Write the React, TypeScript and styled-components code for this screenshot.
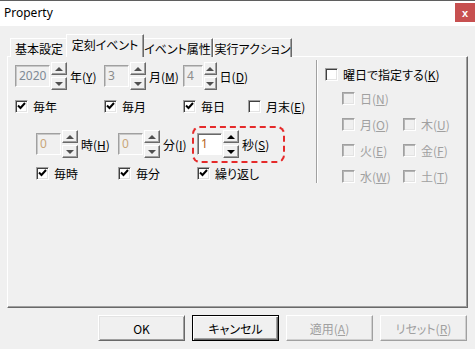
import React from 'react';
import styled, { createGlobalStyle } from 'styled-components';

// ── Global ────────────────────────────────────────────────────────────────────

const GlobalStyle = createGlobalStyle`
  html, body { margin: 0; padding: 0; background: #f0f0f0; }
  body { font-family: "Noto Sans CJK JP", "Noto Sans", sans-serif; }
  * { box-sizing: border-box; }
`;

const JP = `"Noto Sans CJK JP", "Noto Sans", sans-serif`;

// ── Window chrome ─────────────────────────────────────────────────────────────

const Window = styled.div`
  width: 475px;
  height: 349px;
  display: flex;
  flex-direction: column;
  background: #f0f0f0;
  border-top: 1px solid #5f5f5f;
  font-family: ${JP};
  font-size: 12px;
  font-feature-settings: "palt";
  color: #000;
  overflow: hidden;
`;

const TitleBar = styled.div`
  height: 25px;
  background: #fff;
  display: flex;
  align-items: flex-start;
  justify-content: space-between;
  flex-shrink: 0;
`;

const Title = styled.span`
  font-family: "Noto Sans", "Liberation Sans", sans-serif;
  font-size: 12px;
  line-height: 14px;
  padding: 5px 0 0 4px;
`;

const CloseBtn = styled.div`
  width: 20px;
  height: 19px;
  margin-top: 2px;
  background: #c75050;
  color: #fff;
  font-family: "Liberation Sans", sans-serif;
  font-weight: 700;
  font-size: 11px;
  display: flex;
  align-items: center;
  justify-content: center;
`;

const Body = styled.div`
  flex: 1;
  display: flex;
  flex-direction: column;
  padding-top: 8px;
`;

// ── Tabs ──────────────────────────────────────────────────────────────────────

const TabStrip = styled.div`
  display: flex;
  align-items: flex-end;
  height: 23px;
  padding-left: 10px;
  margin-bottom: -1px;
  position: relative;
  z-index: 1;
`;

const Tab = styled.div<{ $w: number; $active?: boolean }>`
  width: ${p => p.$w + (p.$active ? 4 : 0)}px;
  height: ${p => (p.$active ? 23 : 19)}px;
  margin: ${p => (p.$active ? '0 -2px' : '0')};
  padding-bottom: ${p => (p.$active ? 3 : 0)}px;
  position: relative;
  z-index: ${p => (p.$active ? 2 : 1)};
  background: #f0f0f0;
  border: 1px solid;
  border-bottom: none;
  border-color: #fff #696969 transparent #fff;
  box-shadow: inset -1px 0 #a0a0a0;
  display: flex;
  align-items: center;
  justify-content: center;
  font-size: 12px;
  white-space: nowrap;
`;

const Panel = styled.div`
  margin-left: 7px;
  width: 461px;
  height: 252px;
  border: 1px solid;
  border-color: #fff #696969 #696969 #fff;
  box-shadow: inset -1px -1px #a0a0a0;
  display: flex;
`;

// ── Left section ──────────────────────────────────────────────────────────────

const LeftSection = styled.div`
  width: 308px;
  display: flex;
  flex-direction: column;
  padding-top: 5px;
`;

const FieldGrid = styled.div<{ $cols: string; $pad: number; $gap: number; $mt?: number }>`
  display: grid;
  grid-template-columns: ${p => p.$cols};
  grid-template-rows: 28px 16px;
  row-gap: ${p => p.$gap}px;
  align-items: center;
  padding-left: ${p => p.$pad}px;
  margin-top: ${p => p.$mt ?? 0}px;
`;

const Field = styled.div`
  display: flex;
  align-items: center;
  height: 28px;
`;

const Edit = styled.div<{ $w: number; $disabled?: boolean; $color: string }>`
  width: ${p => p.$w}px;
  height: 22px;
  border: 1px solid;
  border-color: #a0a0a0 #fff #fff #a0a0a0;
  box-shadow: ${p => (p.$disabled ? 'inset 1px 1px #c8c8c8' : 'inset 1px 1px #696969')};
  background: ${p => (p.$disabled ? '#f0f0f0' : '#fff')};
  color: ${p => p.$color};
  font-family: "Noto Sans", sans-serif;
  font-size: 12px;
  line-height: 20px;
  padding-left: 3px;
`;

const SpinWrap = styled.div`
  width: 16px;
  height: 28px;
  margin-left: 1px;
  display: flex;
  flex-direction: column;
  justify-content: space-between;
`;

const SpinBtn = styled.div`
  height: 13px;
  border: 1px solid;
  border-color: #fff #696969 #696969 #fff;
  box-shadow: inset -1px -1px #a0a0a0;
  background: #f0f0f0;
  display: flex;
  align-items: center;
  justify-content: center;
`;

const Arrow = styled.span<{ $down?: boolean; $c: string }>`
  width: 0;
  height: 0;
  border-left: 4px solid transparent;
  border-right: 4px solid transparent;
  ${p => (p.$down ? `border-top: 4px solid ${p.$c};` : `border-bottom: 4px solid ${p.$c};`)}
`;

const FieldLabel = styled.span`
  margin-left: 3px;
  white-space: nowrap;
  font-size: 12px;
`;

const SecondsBox = styled.div`
  width: 93px;
  height: 37px;
  margin-left: -5px;
  padding-left: 3px;
  border: 2px dashed #e52a2a;
  border-radius: 8px;
  display: flex;
  align-items: center;
`;

// ── Checkbox ──────────────────────────────────────────────────────────────────

const Check = styled.label<{ $disabled?: boolean }>`
  display: flex;
  align-items: center;
  gap: 5px;
  height: 16px;
  white-space: nowrap;
  font-size: 12px;
  color: ${p => (p.$disabled ? '#a0a0a0' : '#000')};
`;

const Box = styled.span<{ $disabled?: boolean }>`
  width: 13px;
  height: 13px;
  flex-shrink: 0;
  border: 1px solid;
  border-color: #a0a0a0 #fff #fff #a0a0a0;
  box-shadow: ${p =>
    p.$disabled ? 'inset 1px 1px #b4b4b4, inset -1px -1px #e3e3e3' : 'inset 1px 1px #404040, inset -1px -1px #e3e3e3'};
  background: ${p => (p.$disabled ? '#f0f0f0' : '#fff')};
  display: flex;
  align-items: center;
  justify-content: center;
`;

// ── Right section ─────────────────────────────────────────────────────────────

const Separator = styled.div`
  width: 2px;
  height: 123px;
  margin-top: 3px;
  border-left: 1px solid #a0a0a0;
  border-right: 1px solid #fff;
`;

const RightSection = styled.div`
  display: flex;
  flex-direction: column;
  padding: 9px 0 0 7px;
`;

const DayGrid = styled.div`
  display: grid;
  grid-template-columns: 61px auto;
  row-gap: 10px;
  padding-left: 17px;
  margin-top: 8px;
`;

const DayCell = styled.div<{ $wide?: boolean }>`
  grid-column: ${p => (p.$wide ? '1 / span 2' : 'auto')};
`;

// ── Buttons ───────────────────────────────────────────────────────────────────

const ButtonRow = styled.div`
  display: flex;
  justify-content: flex-end;
  gap: 7px;
  padding: 7px 8px 0 0;
`;

const Btn = styled.div<{ $default?: boolean; $disabled?: boolean }>`
  width: 87px;
  height: 26px;
  display: flex;
  align-items: center;
  justify-content: center;
  font-size: 12px;
  background: #f0f0f0;
  color: ${p => (p.$disabled ? '#a0a0a0' : '#000')};
  border: 1px solid;
  border-color: ${p => (p.$default ? '#000' : p.$disabled ? '#fff #a0a0a0 #a0a0a0 #fff' : '#fff #696969 #696969 #fff')};
  box-shadow: ${p =>
    p.$default
      ? 'inset 1px 1px #fff, inset -1px -1px #696969, inset -2px -2px #a0a0a0'
      : p.$disabled
      ? 'inset -1px -1px #d0d0d0'
      : 'inset 1px 1px #e3e3e3, inset -1px -1px #a0a0a0'};
`;

// ── Parts ─────────────────────────────────────────────────────────────────────

function Mn({ label, k }: { label: string; k: string }) {
  return (
    <>
      {label}(<u>{k}</u>)
    </>
  );
}

function Spin({ c }: { c: string }) {
  return (
    <SpinWrap>
      <SpinBtn><Arrow $c={c} /></SpinBtn>
      <SpinBtn><Arrow $c={c} $down /></SpinBtn>
    </SpinWrap>
  );
}

function CheckBox({ checked, disabled, children }: { checked?: boolean; disabled?: boolean; children: React.ReactNode }) {
  return (
    <Check $disabled={disabled}>
      <Box $disabled={disabled}>
        {checked && (
          <svg width="9" height="8" viewBox="0 0 9 8">
            <polyline points="1,3.5 3.5,6 8,1" fill="none" stroke="#000" strokeWidth="2" />
          </svg>
        )}
      </Box>
      <span>{children}</span>
    </Check>
  );
}

type FieldProps = { value: string; w: number; label: string; k: string; disabled?: boolean; color: string; arrow: string };

function SpinField({ value, w, label, k, disabled, color, arrow }: FieldProps) {
  return (
    <>
      <Edit $w={w} $disabled={disabled} $color={color}>{value}</Edit>
      <Spin c={arrow} />
      <FieldLabel><Mn label={label} k={k} /></FieldLabel>
    </>
  );
}

const days: [string, string][][] = [
  [['日', 'N']],
  [['月', 'O'], ['木', 'U']],
  [['火', 'E'], ['金', 'F']],
  [['水', 'W'], ['土', 'T']],
];

// ── Component ─────────────────────────────────────────────────────────────────

export default function App() {
  return (
    <>
      <GlobalStyle />
      <Window>
        <TitleBar>
          <Title>Property</Title>
          <CloseBtn>x</CloseBtn>
        </TitleBar>

        <Body>
          <TabStrip>
            <Tab $w={58}>基本設定</Tab>
            <Tab $w={74} $active>定刻イベント</Tab>
            <Tab $w={71}>イベント属性</Tab>
            <Tab $w={79}>実行アクション</Tab>
          </TabStrip>

          <Panel>
            <LeftSection>
              <FieldGrid $cols="89px 79px 65px auto" $pad={7} $gap={8}>
                <Field>
                  <SpinField value="2020" w={35} label="年" k="Y" disabled color="#7f8a96" arrow="#505050" />
                </Field>
                <Field>
                  <SpinField value="3" w={25} label="月" k="M" disabled color="#8c8c8c" arrow="#505050" />
                </Field>
                <Field>
                  <SpinField value="4" w={25} label="日" k="D" disabled color="#8c8c8c" arrow="#505050" />
                </Field>
                <span />
                <CheckBox checked>毎年</CheckBox>
                <CheckBox checked>毎月</CheckBox>
                <CheckBox checked>毎日</CheckBox>
                <CheckBox><Mn label="月末" k="E" /></CheckBox>
              </FieldGrid>

              <FieldGrid $cols="82px 79px auto" $pad={28} $gap={7} $mt={16}>
                <Field>
                  <SpinField value="0" w={25} label="時" k="H" disabled color="#c9a67a" arrow="#505050" />
                </Field>
                <Field>
                  <SpinField value="0" w={25} label="分" k="I" disabled color="#c9a67a" arrow="#505050" />
                </Field>
                <Field>
                  <SecondsBox>
                    <SpinField value="1" w={25} label="秒" k="S" color="#b5651d" arrow="#000" />
                  </SecondsBox>
                </Field>
                <CheckBox checked>毎時</CheckBox>
                <CheckBox checked>毎分</CheckBox>
                <CheckBox checked>繰り返し</CheckBox>
              </FieldGrid>
            </LeftSection>

            <Separator />

            <RightSection>
              <CheckBox><Mn label="曜日で指定する" k="K" /></CheckBox>
              <DayGrid>
                {days.map(row =>
                  row.map(([d, k]) => (
                    <DayCell key={d} $wide={row.length === 1}>
                      <CheckBox disabled><Mn label={d} k={k} /></CheckBox>
                    </DayCell>
                  ))
                )}
              </DayGrid>
            </RightSection>
          </Panel>

          <ButtonRow>
            <Btn>OK</Btn>
            <Btn $default>キャンセル</Btn>
            <Btn $disabled><Mn label="適用" k="A" /></Btn>
            <Btn $disabled><Mn label="リセット" k="R" /></Btn>
          </ButtonRow>
        </Body>
      </Window>
    </>
  );
}
